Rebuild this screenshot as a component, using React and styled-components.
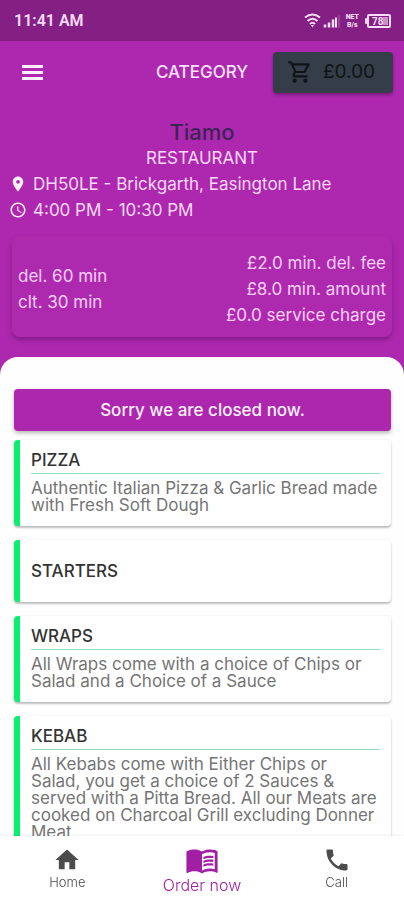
import React from "react";
import styled, { createGlobalStyle } from "styled-components";
import {
  MdAccessTime,
  MdHome,
  MdLocationOn,
  MdMenuBook,
  MdOutlineShoppingCart,
  MdPhone,
} from "react-icons/md";

const GlobalStyle = createGlobalStyle`
  * {
    box-sizing: border-box;
  }
  body {
    margin: 0;
    background: #ad28af;
    font-family: Inter, "Liberation Sans", sans-serif;
  }
  h1, h2, p {
    margin: 0;
  }
  button {
    font-family: inherit;
    border: none;
    cursor: pointer;
  }
`;

const Screen = styled.div`
  display: flex;
  flex-direction: column;
  height: 100vh;
  overflow: hidden;
`;

const StatusBar = styled.div`
  display: flex;
  flex-shrink: 0;
  align-items: center;
  justify-content: space-between;
  height: 41px;
  padding: 1px 13px 0 14px;
  background: #842084;
  color: #f8dcf8;
`;

const Clock = styled.span`
  font-family: Roboto, sans-serif;
  font-size: 16px;
  font-weight: 600;
  line-height: 20px;
`;

const StatusIcons = styled.div`
  display: flex;
  align-items: center;
  gap: 6px;
`;

const NetSpeed = styled.span`
  font-family: Roboto, sans-serif;
  font-size: 7px;
  font-weight: 900;
  line-height: 8px;
  text-align: center;
`;

const Toolbar = styled.header`
  display: grid;
  grid-template-columns: 1fr auto 1fr;
  flex-shrink: 0;
  align-items: center;
  height: 62px;
  padding: 0 11px;
`;

const MenuButton = styled.button`
  display: flex;
  justify-self: start;
  padding: 8px 11px;
  background: none;
  color: #fff0ff;
`;

const ToolbarTitle = styled.h2`
  font-size: 17px;
  font-weight: 500;
  line-height: 24px;
  color: #fbe3fb;
`;

const CartButton = styled.button`
  display: flex;
  justify-self: end;
  align-items: center;
  gap: 10px;
  height: 41px;
  padding: 0 18px 0 14px;
  border-radius: 4px;
  background: #353d48;
  box-shadow: 0 2px 3px rgba(0, 0, 0, 0.3);
  color: #101318;
  font-size: 19px;
  line-height: 24px;
`;

const Intro = styled.section`
  display: flex;
  flex-direction: column;
  flex-shrink: 0;
  padding: 16px 9px 13px;
  color: #fbd9fa;
`;

const Name = styled.h1`
  text-align: center;
  font-size: 22px;
  font-weight: 500;
  line-height: 26px;
  color: #3b2456;
`;

const Kind = styled.p`
  text-align: center;
  font-size: 17px;
  line-height: 26px;
`;

const InfoRow = styled.p`
  display: flex;
  align-items: center;
  gap: 6px;
  font-size: 17px;
  line-height: 26px;

  svg {
    flex-shrink: 0;
    color: #fff0ff;
  }
`;

const Terms = styled.section`
  display: flex;
  flex-shrink: 0;
  align-items: center;
  justify-content: space-between;
  margin: 0 12px 20px;
  padding: 14px 6px 9px;
  border-radius: 8px;
  background: #ad2aae;
  box-shadow: 0 3px 5px rgba(70, 0, 80, 0.35);
  color: #fbd0fa;
  font-size: 17px;
  line-height: 26px;
`;

const TermsColumn = styled.div`
  text-align: ${(props) => props.$align};
`;

const Sheet = styled.main`
  flex: 1;
  min-height: 0;
  overflow-y: auto;
  scrollbar-width: none;
  padding: 32px 13px 0 14px;
  border-radius: 18px 18px 0 0;
  background: #fefefe;
`;

const ClosedNotice = styled.p`
  margin-bottom: 9px;
  padding: 9px;
  border-radius: 4px;
  background: #ac27ae;
  box-shadow: 0 2px 4px rgba(0, 0, 0, 0.3);
  color: #fff0ff;
  text-align: center;
  font-size: 17px;
  font-weight: 500;
  line-height: 24px;
`;

const Category = styled.article`
  display: flex;
  flex-direction: column;
  justify-content: center;
  min-height: 62px;
  margin-bottom: 14px;
  padding: ${(props) => (props.$plain ? "8px 11px" : "8px 11px 12px")};
  border-left: 6px solid #08f070;
  border-radius: 4px;
  background: #fff;
  box-shadow: 0 2px 2px rgba(0, 0, 0, 0.24), 0 0 2px rgba(0, 0, 0, 0.1);
`;

const CategoryName = styled.h2`
  font-size: 17px;
  font-weight: 500;
  line-height: 24px;
  color: #333;
`;

const CategoryText = styled.p`
  margin-top: 1px;
  padding-top: 6px;
  border-top: 1px solid #8ee5c0;
  font-size: 17px;
  font-weight: 400;
  line-height: 17px;
  color: #757575;
`;

const BottomNav = styled.nav`
  display: grid;
  grid-template-columns: repeat(3, 1fr);
  flex-shrink: 0;
  height: 64px;
  background: #fff;
  box-shadow: 0 -1px 2px rgba(0, 0, 0, 0.06);
  z-index: 1;
`;

const NavItem = styled.a`
  display: flex;
  flex-direction: column;
  align-items: center;
  justify-content: center;
  color: ${(props) => (props.$active ? "#a01fa4" : "#4c4c4c")};
  font-size: ${(props) => (props.$active ? "16px" : "13px")};
  font-weight: 300;
  line-height: 16px;
  text-decoration: none;
`;

const categories = [
  {
    name: "PIZZA",
    text: "Authentic Italian Pizza & Garlic Bread made with Fresh Soft Dough",
  },
  { name: "STARTERS" },
  {
    name: "WRAPS",
    text: "All Wraps come with a choice of Chips or Salad and a Choice of a Sauce",
  },
  {
    name: "KEBAB",
    text: "All Kebabs come with Either Chips or Salad, you get a choice of 2 Sauces & served with a Pitta Bread. All our Meats are cooked on Charcoal Grill excluding Donner Meat",
  },
];

function MenuIcon() {
  return (
    <svg width="21" height="15" viewBox="0 0 21 15" fill="currentColor">
      <rect width="21" height="3" />
      <rect y="6" width="21" height="3" />
      <rect y="12" width="21" height="3" />
    </svg>
  );
}

function SignalIcons() {
  return (
    <svg width="36" height="16" viewBox="0 0 36 16" fill="none" stroke="currentColor">
      <path d="M1 4.500Q8.500-1.500 16 4.500M3.500 8Q8.500 3.500 13.500 8M6 11Q8.500 8.500 11 11" strokeWidth="2" />
      <path d="M7 12h3l-1.500 2.500z" fill="currentColor" stroke="none" />
      <path d="M21 14.500v-3M25 14.500v-5M29 14.500v-8" strokeWidth="2.500" />
      <path d="M32 14.500v-10" strokeWidth="2" />
      <path d="M35 14.500v-12" strokeWidth="1" opacity="0.4" />
    </svg>
  );
}

function Battery() {
  return (
    <svg width="26" height="14" viewBox="0 0 26 14">
      <rect x="3" y="1" width="22" height="12" rx="1" fill="none" stroke="currentColor" strokeWidth="2" />
      <rect x="0" y="4" width="2" height="6" rx="1" fill="currentColor" />
      <rect x="18" y="3" width="5" height="8" fill="currentColor" opacity="0.6" />
      <text x="7" y="11" fontFamily="Roboto, sans-serif" fontSize="10" fontWeight="700" fill="currentColor">
        78
      </text>
    </svg>
  );
}

function App() {
  return (
    <Screen>
      <GlobalStyle />
      <StatusBar>
        <Clock>11:41 AM</Clock>
        <StatusIcons>
          <SignalIcons />
          <NetSpeed>
            NET
            <br />
            B/s
          </NetSpeed>
          <Battery />
        </StatusIcons>
      </StatusBar>

      <Toolbar>
        <MenuButton aria-label="Menu">
          <MenuIcon />
        </MenuButton>
        <ToolbarTitle>CATEGORY</ToolbarTitle>
        <CartButton aria-label="Cart">
          <MdOutlineShoppingCart size={26} />
          £0.00
        </CartButton>
      </Toolbar>

      <Intro>
        <Name>Tiamo</Name>
        <Kind>RESTAURANT</Kind>
        <InfoRow>
          <MdLocationOn size={18} />
          DH50LE - Brickgarth, Easington Lane
        </InfoRow>
        <InfoRow>
          <MdAccessTime size={18} />
          4:00 PM - 10:30 PM
        </InfoRow>
      </Intro>

      <Terms>
        <TermsColumn $align="left">
          <p>del. 60 min</p>
          <p>clt. 30 min</p>
        </TermsColumn>
        <TermsColumn $align="right">
          <p>£2.0 min. del. fee</p>
          <p>£8.0 min. amount</p>
          <p>£0.0 service charge</p>
        </TermsColumn>
      </Terms>

      <Sheet>
        <ClosedNotice>Sorry we are closed now.</ClosedNotice>
        {categories.map((category) => (
          <Category key={category.name} $plain={!category.text}>
            <CategoryName>{category.name}</CategoryName>
            {category.text && <CategoryText>{category.text}</CategoryText>}
          </Category>
        ))}
      </Sheet>

      <BottomNav>
        <NavItem href="#home">
          <MdHome size={28} />
          Home
        </NavItem>
        <NavItem href="#order" $active>
          <MdMenuBook size={34} />
          Order now
        </NavItem>
        <NavItem href="#call">
          <MdPhone size={28} />
          Call
        </NavItem>
      </BottomNav>
    </Screen>
  );
}

export default App;
